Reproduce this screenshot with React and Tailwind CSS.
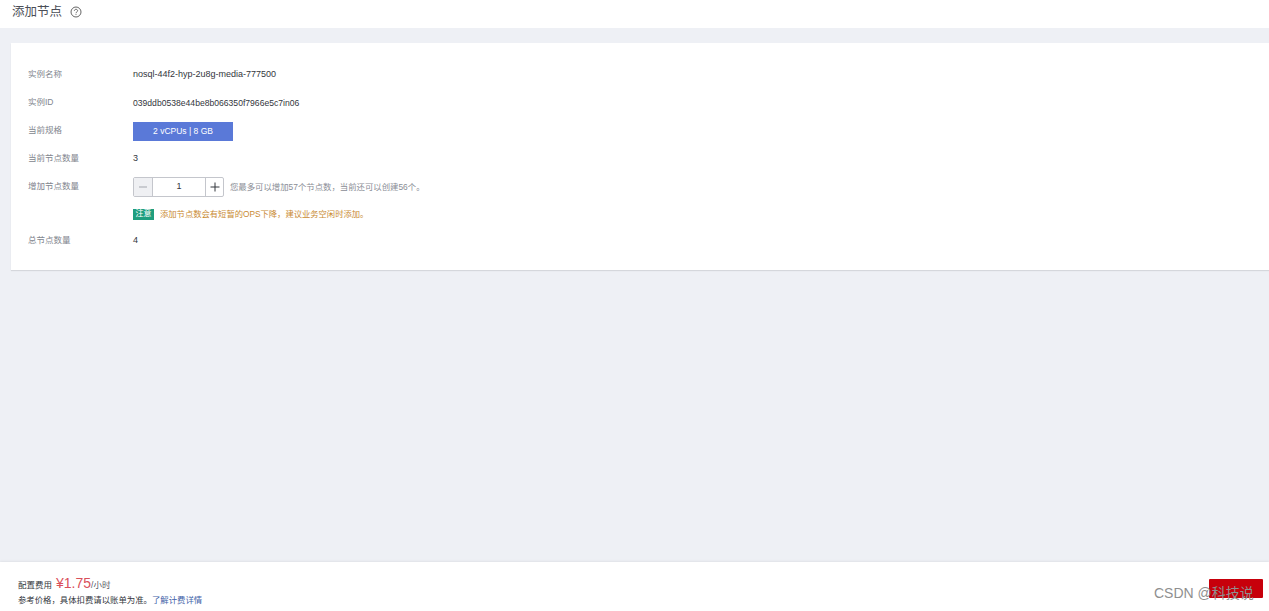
import React from "react";

const font = { fontFamily: '"Liberation Sans", "Noto Sans CJK SC", sans-serif' };

function Row({ label, children, className = "h-7" }) {
  return (
    <div className={`flex items-center ${className}`}>
      <div className="w-[105px] shrink-0 mb-[2px] text-[8.5px] text-[#82868e]">{label}</div>
      <div className="flex items-center min-w-0">{children}</div>
    </div>
  );
}

export default function App() {
  return (
    <div style={font} className="relative flex flex-col h-[611px] w-[1269px] overflow-hidden bg-[#eef0f5]">
      <header className="flex items-center h-[28px] shrink-0 bg-white pl-[12px] pb-[3px]">
        <span className="text-[12.5px] text-[#4b4e57]">添加节点</span>
        <svg className="ml-[8px] mb-[1px]" width="12" height="12" viewBox="0 0 12 12" fill="none" stroke="#555" strokeWidth="0.9">
          <circle cx="6" cy="6" r="5" />
          <path d="M4.4 4.8c0-1 .8-1.5 1.6-1.5s1.6.5 1.6 1.4c0 1.2-1.6 1.2-1.6 2.5" />
          <path d="M6 8.2v.8" />
        </svg>
      </header>

      <main className="flex-1 min-h-0 pt-[15px] pl-[11px]">
        <section className="h-[227px] bg-white pl-[17px] pt-[18px] shadow-[0_1px_1px_rgba(0,0,0,0.1)]">
          <Row label="实例名称">
            <span className="text-[9px] text-[#33363d]">nosql-44f2-hyp-2u8g-media-777500</span>
          </Row>
          <Row label="实例ID">
            <span className="text-[8.6px] text-[#33363d]">039ddb0538e44be8b066350f7966e5c7in06</span>
          </Row>
          <Row label="当前规格">
            <button className="w-[100px] h-[19px] mt-[1px] bg-[#5a79d8] text-[8.5px] text-white">2 vCPUs | 8 GB</button>
          </Row>
          <Row label="当前节点数量">
            <span className="text-[9px] text-[#33363d]">3</span>
          </Row>
          <Row label="增加节点数量">
            <div className="flex items-center h-[20px] w-[91px] border border-[#c4c6cc] rounded-[2px] text-[#33363d]">
              <div className="flex items-center justify-center w-[19px] h-full bg-[#eff0f3] border-r border-[#c4c6cc] text-[#a3a6ad]">
                <svg width="10" height="10" viewBox="0 0 10 10" stroke="currentColor"><path d="M1 5h8" /></svg>
              </div>
              <div className="flex-1 text-center text-[9px]">1</div>
              <div className="flex items-center justify-center w-[18px] h-full border-l border-[#c4c6cc]">
                <svg width="10" height="10" viewBox="0 0 10 10" stroke="currentColor"><path d="M0.5 5h9M5 0.5v9" /></svg>
              </div>
            </div>
            <span className="ml-[6px] text-[8.4px] text-[#8a8d95]">您最多可以增加57个节点数，当前还可以创建56个。</span>
          </Row>
          <Row label="" className="h-[26px]">
            <span className="flex items-center justify-center w-[21px] h-[11px] bg-[#1f9e7e] text-[8px] text-white">注意</span>
            <span className="ml-[6px] text-[8.3px] text-[#c98a32]">添加节点数会有短暂的OPS下降，建议业务空闲时添加。</span>
          </Row>
          <Row label="总节点数量">
            <span className="text-[9px] text-[#33363d]">4</span>
          </Row>
        </section>
      </main>

      <footer className="flex items-center justify-between h-[49px] shrink-0 bg-white pl-[18px] pr-[6px] shadow-[0_-1px_2px_rgba(0,0,0,0.06)]">
        <div className="pt-[8px]">
          <div className="flex items-baseline h-[18px]">
            <span className="text-[8.5px] text-[#33363d]">配置费用</span>
            <span className="ml-[4px] text-[14px] leading-none text-[#d9505a]">¥1.75</span>
            <span className="text-[8.5px] text-[#55585f]">/小时</span>
          </div>
          <div className="text-[8.4px] leading-[12px] text-[#33363d]">
            参考价格，具体扣费请以账单为准。<span className="text-[#3f62a8]">了解计费详情</span>
          </div>
        </div>
        <button className="w-[54px] h-[19px] mt-[4px] bg-[#c7000b] rounded-[1px]" />
      </footer>

      <div className="absolute left-[1154px] top-[585px] text-[14px] leading-[17px] text-[#8f8f8f] whitespace-nowrap">
        CSDN @科技说
      </div>
    </div>
  );
}
